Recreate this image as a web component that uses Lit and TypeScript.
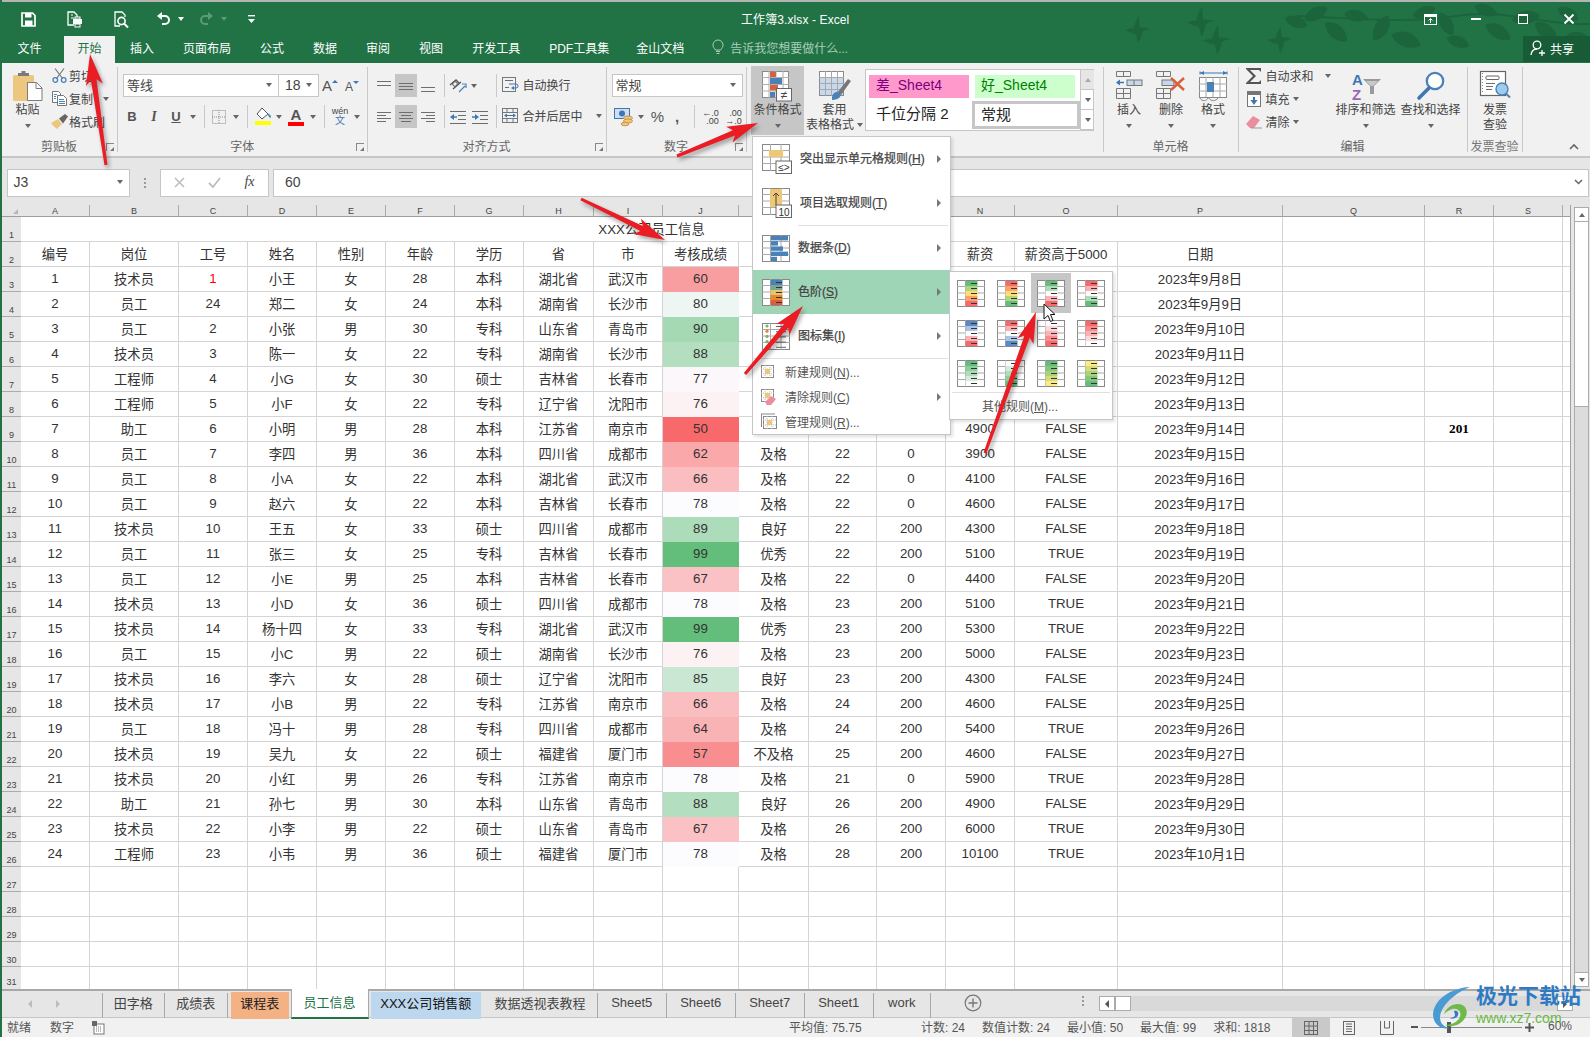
import { LitElement, html, css, svg } from 'lit';
import { customElement } from 'lit/decorators.js';

// sheet data, columns A..J then K..O where they show
const PEOPLE = `1 技术员 1 小王 女 28 本科 湖北省 武汉市 60
2 员工 24 郑二 女 24 本科 湖南省 长沙市 80
3 员工 2 小张 男 30 专科 山东省 青岛市 90
4 技术员 3 陈一 女 22 专科 湖南省 长沙市 88
5 工程师 4 小G 女 30 硕士 吉林省 长春市 77
6 工程师 5 小F 女 22 专科 辽宁省 沈阳市 76
7 助工 6 小明 男 28 本科 江苏省 南京市 50 - - - 4900 FALSE
8 员工 7 李四 男 36 本科 四川省 成都市 62 及格 22 0 3900 FALSE
9 员工 8 小A 女 22 本科 湖北省 武汉市 66 及格 22 0 4100 FALSE
10 员工 9 赵六 女 22 本科 吉林省 长春市 78 及格 22 0 4600 FALSE
11 技术员 10 王五 女 33 硕士 四川省 成都市 89 良好 22 200 4300 FALSE
12 员工 11 张三 女 25 专科 吉林省 长春市 99 优秀 22 200 5100 TRUE
13 员工 12 小E 男 25 本科 吉林省 长春市 67 及格 22 0 4400 FALSE
14 技术员 13 小D 女 36 硕士 四川省 成都市 78 及格 23 200 5100 TRUE
15 技术员 14 杨十四 女 33 专科 湖北省 武汉市 99 优秀 23 200 5300 TRUE
16 员工 15 小C 男 22 硕士 湖南省 长沙市 76 及格 23 200 5000 FALSE
17 技术员 16 李六 女 28 硕士 辽宁省 沈阳市 85 良好 23 200 4300 FALSE
18 技术员 17 小B 男 22 专科 江苏省 南京市 66 及格 24 200 4600 FALSE
19 员工 18 冯十 男 28 专科 四川省 成都市 64 及格 24 200 5400 TRUE
20 技术员 19 吴九 女 22 硕士 福建省 厦门市 57 不及格 25 200 4600 FALSE
21 技术员 20 小红 男 26 专科 江苏省 南京市 78 及格 21 0 5900 TRUE
22 助工 21 孙七 男 30 本科 山东省 青岛市 88 良好 26 200 4900 FALSE
23 技术员 22 小李 男 22 硕士 山东省 青岛市 67 及格 26 200 6000 TRUE
24 工程师 23 小韦 男 36 硕士 福建省 厦门市 78 及格 28 200 10100 TRUE`
  .split('\n')
  .map((l) => l.split(' '));

const HEAD = ['编号', '岗位', '工号', '姓名', '性别', '年龄', '学历', '省', '市', '考核成绩', '', '', '', '薪资', '薪资高于5000', '日期'];
const LETTERS = 'A B C D E F G H I J K L M N O P Q R S'.split(' ').concat('');

function dateOf(i: number) {
  return i < 23 ? `2023年9月${i + 8}日` : '2023年10月1日';
}

// green-white-red scale as excel does it, midpoint at the median
function scale(v: number) {
  const low = [0xf8, 0x69, 0x6b];
  const mid = [0xfc, 0xfc, 0xff];
  const high = [0x63, 0xbe, 0x7b];
  const t = v < 78 ? (v - 50) / 28 : (v - 78) / 21;
  const a = v < 78 ? low : mid;
  const b = v < 78 ? mid : high;
  const c = a.map((x, i) => Math.round(x + (b[i] - x) * t));
  return `rgb(${c[0]},${c[1]},${c[2]})`;
}

// ---- icons ----
const ic = (w: number, h: number, body: unknown) =>
  html`<svg width=${w} height=${h} viewBox="0 0 ${w} ${h}">${body}</svg>`;

const grey = '#6d6d6d';
const lines = (rows: number[][], c = grey) =>
  rows.map(([a, b, y]) => svg`<rect x=${a} y=${y} width=${b - a} height="1" fill=${c}/>`);

const saveIc = ic(15, 15, svg`<path d="M1 1h10.500l2.500 2.500V14H1z" fill="none" stroke="#fff" stroke-width="1.700"/><rect x="4" y="1" width="6.500" height="4.500" fill="#fff"/><rect x="4" y="8.500" width="7.500" height="5.500" fill="#fff"/>`);
const touchIc = ic(17, 17, svg`<path d="M8 14H2V1h6l3 3v2" fill="none" stroke="#fff" stroke-width="1.300"/><path d="M5 4h2M5 7h3" stroke="#fff"/><rect x="7" y="8" width="9" height="5" fill="#fff"/><rect x="9" y="6" width="5" height="2" fill="none" stroke="#fff"/><rect x="9" y="13" width="5" height="3" fill="none" stroke="#fff"/>`);
const previewIc = ic(15, 17, svg`<path d="M6 15H1V1h7l3 3v2" fill="none" stroke="#fff" stroke-width="1.300"/><circle cx="7.500" cy="10" r="3.600" fill="none" stroke="#fff" stroke-width="1.600"/><path d="M10 12.500l4 4" stroke="#fff" stroke-width="2"/>`);
const undoIc = (c: string) => ic(15, 14, svg`<path d="M3 4h6a4 4 0 0 1 0 8H6" fill="none" stroke=${c} stroke-width="2"/><path d="M6 0L1 4l5 4z" fill=${c}/>`);
const redoIc = (c: string) => ic(15, 14, svg`<g transform="translate(15 0) scale(-1 1)"><path d="M3 4h6a4 4 0 0 1 0 8H6" fill="none" stroke=${c} stroke-width="2"/><path d="M6 0L1 4l5 4z" fill=${c}/></g>`);
const custIc = ic(8, 10, svg`<rect y="1" width="7" height="1.400" fill="#fff"/><path d="M0 5h7L3.500 9z" fill="#fff"/>`);
const bulbIc = ic(12, 16, svg`<path d="M3.500 11C2 9 1 8 1 6a5 5 0 0 1 10 0c0 2-1 3-2.500 5z" fill="none" stroke="#a9cdb8"/><path d="M4 12.500h4M4.500 14.500h3" stroke="#a9cdb8"/>`);
const shareIc = ic(16, 16, svg`<circle cx="7" cy="5" r="3.800" fill="none" stroke="#fff" stroke-width="1.300"/><path d="M1 15c.5-4 3-6 6-6" fill="none" stroke="#fff" stroke-width="1.300"/><path d="M9 13h6M12 10v6" stroke="#fff" stroke-width="1.300"/>`);
const displayIc = ic(13, 11, svg`<rect x=".5" y=".5" width="12" height="10" fill="none" stroke="#fff"/><rect x="1" y="1" width="11" height="2" fill="#fff"/><path d="M6.500 9V5M4.500 6.500l2-2 2 2" fill="none" stroke="#fff"/>`);
const minIc = ic(10, 3, svg`<rect width="10" height="2" fill="#fff"/>`);
const maxIc = ic(10, 10, svg`<rect x=".5" y=".5" width="9" height="9" fill="none" stroke="#fff"/><rect width="10" height="2" fill="#fff"/>`);
const closeIc = ic(10, 10, svg`<path d="M.5.500l9 9M9.500.500l-9 9" stroke="#fff" stroke-width="1.800"/>`);

const pasteIc = ic(30, 30, svg`<rect x="0" y="4" width="21" height="26" rx="1.500" fill="#edc77f"/><path d="M5 5V2h3.500V0h4v2H16v3z" fill="#7a7a7a"/><path d="M14.500 11.500h9l5.500 5.500v12.500H14.500z" fill="#fff" stroke="#7c7c7c"/><path d="M23 12v5.500h6" fill="none" stroke="#7c7c7c"/>`);
const cutIc = ic(15, 15, svg`<path d="M3 .5l7.500 10M12 .5L4.500 10.500" stroke="#777" stroke-width="1.200"/><circle cx="3.300" cy="12" r="2.300" fill="none" stroke="#4a82b8" stroke-width="1.300"/><circle cx="11.700" cy="12" r="2.300" fill="none" stroke="#4a82b8" stroke-width="1.300"/>`);
const copyIc = ic(15, 15, svg`<path d="M.5.500h6l2 2v9H.5z" fill="#fff" stroke="#777"/><path d="M5.500 4.500h6l3 3v7h-9z" fill="#fff" stroke="#777"/>${lines([[2, 5, 3], [2, 4, 5], [2, 4, 7], [7, 12, 8], [7, 13, 10], [7, 13, 12]], '#4a82b8')}`);
const brushIc = ic(17, 15, svg`<path d="M0 9l7-4 4 5-5 5c-2-2-4-3-6-6z" fill="#edc77f"/><path d="M8 4.500l6-4.500 3 2.500-5 7z" fill="#666"/>`);
const bordersIc = ic(14, 14, svg`<rect x=".5" y=".5" width="13" height="13" fill="none" stroke="#8d8d8d" stroke-dasharray="1 1"/><path d="M7 0v14M0 7h14" stroke="#8d8d8d" stroke-dasharray="1 1"/>`);
const fillIc = ic(17, 19, svg`<path d="M7 1l6 6-6 5-5-5z" fill="#fff" stroke="#555"/><path d="M12 6c3 1 4 3 4 4s-1 1-2 0z" fill="#4a82b8"/><rect y="14" width="16" height="4" fill="#ffff00"/>`);
const alignIc = (rows: number[][]) => ic(16, 14, lines(rows, '#6e6e6e'));
const orientIc = ic(19, 18, svg`<path d="M1 8l6-5 3 3M4 12l8-7" fill="none" stroke="#555" stroke-width="1.300"/><path d="M10 15l6-6M13 7h4v4" fill="none" stroke="#4a82b8" stroke-width="1.200"/><circle cx="6" cy="7" r="2.300" fill="none" stroke="#555"/>`);
const indL = ic(17, 14, svg`${lines([[0, 16, 1], [8, 16, 5], [8, 16, 9], [0, 16, 13]])}<path d="M7 7H2" stroke="#3d78b4" stroke-width="1.500"/><path d="M4 4L0 7l4 3z" fill="#3d78b4"/>`);
const indR = ic(17, 14, svg`${lines([[0, 16, 1], [8, 16, 5], [8, 16, 9], [0, 16, 13]])}<path d="M0 7h5" stroke="#3d78b4" stroke-width="1.500"/><path d="M3 4l4 3-4 3z" fill="#3d78b4"/>`);
const wrapIc = ic(16, 15, svg`<rect x=".5" y=".5" width="13" height="14" fill="none" stroke="#777"/>${lines([[3, 11, 3], [3, 7, 10]])}<path d="M7 7h7a1.500 1.500 0 0 1 0 4h-3" fill="none" stroke="#3d78b4"/><path d="M12 9l-3 2 3 2z" fill="#3d78b4"/>`);
const mergeIc = ic(16, 15, svg`<rect x=".5" y=".5" width="15" height="14" fill="none" stroke="#777"/><path d="M0 4.500h16M0 10.500h16M5 0v4M11 0v4M5 11v4M11 11v4" stroke="#777"/><path d="M3 7.500h10" stroke="#3d78b4"/><path d="M5 5.500l-3 2 3 2zM11 5.500l3 2-3 2z" fill="#3d78b4"/>`);
const currIc = ic(19, 18, svg`<rect x=".5" y=".5" width="15" height="10" fill="#cfdfef" stroke="#3d78b4"/><circle cx="8" cy="5.500" r="3" fill="#3d78b4"/><ellipse cx="14" cy="10" rx="4.500" ry="2" fill="#edc77f" stroke="#c9964e"/><ellipse cx="14" cy="13" rx="4.500" ry="2" fill="#edc77f" stroke="#c9964e"/><ellipse cx="11" cy="16" rx="4" ry="1.800" fill="#edc77f" stroke="#c9964e"/>`);

const condIc = ic(31, 31, svg`<rect x=".5" y=".5" width="26" height="26" fill="#fff" stroke="#8a8a8a"/><path d="M7 0v27M14 0v27M21 0v27M0 6.500h27M0 13.500h27M0 20h27" stroke="#b0b0b0"/><rect x="8" y="1" width="6" height="5" fill="#d9603b"/><rect x="8" y="7" width="12" height="6" fill="#4a82b8"/><rect x="8" y="14" width="8" height="5.500" fill="#d9603b"/><rect x="8" y="21" width="5" height="5" fill="#4a82b8"/><rect x="14.500" y="17.500" width="15" height="12.500" fill="#fff" stroke="#666"/><text x="22" y="27.500" font-size="12" text-anchor="middle" fill="#444" font-family="Liberation Sans">≠</text>`);
const tableIc = ic(32, 30, svg`<rect x=".5" y=".5" width="24" height="24" fill="#fff" stroke="#8a8a8a"/><rect x="1" y="7" width="23" height="17" fill="#c7d9ec"/><path d="M6.500 0v25M12.500 0v25M18.500 0v25M0 6.500h25M0 12.500h25M0 18.500h25" stroke="#a8a8a8"/><path d="M18 22l11-14 3 2-10 14z" fill="#777"/><path d="M13 26c1-5 5-6 8-4 2 3-1 7-8 7z" fill="#4a82b8"/>`);
const insertIc = ic(27, 28, svg`<path d="M.5.500h14v5h-14zM7.500 0v6M.5 17.500h14v10h-14zM0 22.500h15M7.500 17v11" fill="none" stroke="#777"/><rect x="11" y="9" width="15" height="5.500" fill="#c6d9ec" stroke="#777"/><path d="M18 9v5.500" stroke="#777"/><path d="M1 11.500h7" stroke="#3d78b4" stroke-width="1.500"/><path d="M4 8.500l-4 3 4 3z" fill="#3d78b4"/>`);
const deleteIc = ic(30, 28, svg`<path d="M.5.500h14v5h-14zM7.500 0v6M.5 17.500h14v10h-14zM0 22.500h15M7.500 17v11" fill="none" stroke="#777"/><rect x="6" y="9" width="12" height="5.500" fill="#c6d9ec" stroke="#777"/><path d="M15 7l13 12M28 7L15 19" stroke="#d9603b" stroke-width="2.500"/>`);
const formatIc = ic(29, 31, svg`<path d="M1 2h27M1 .5v3M28 .5v3" stroke="#3d78b4"/><path d="M5 0L1 2l4 2zM24 0l4 2-4 2z" fill="#3d78b4"/><rect x=".5" y="6.500" width="27" height="20" fill="#fff" stroke="#8a8a8a"/><path d="M7 6v20M14 6v20M21 6v20M0 13h28M0 20h28" stroke="#a8a8a8"/><rect x="8" y="11" width="7" height="10" fill="#4a82b8"/><path d="M1 27c2 4 7 3 8 0M10 27c2 4 7 3 9 0" fill="none" stroke="#888"/>`);
const sigmaIc = ic(16, 16, svg`<path d="M0 0h15v4l-2-2H4l6 6-6 6h9l2-2v4H0v-1l7-7-7-7z" fill="#555"/>`);
const fillDownIc = ic(14, 16, svg`<rect x=".5" y=".5" width="13" height="15" fill="#fff" stroke="#777"/><rect x="1" y="1" width="12" height="3" fill="#777"/><path d="M7 6v6" stroke="#3d78b4" stroke-width="2"/><path d="M3.500 9L7 14l3.500-5z" fill="#3d78b4"/>`);
const eraserIc = ic(16, 14, svg`<path d="M0 9l7-8 7 4-6 8H4z" fill="#ea8e9e"/><path d="M5 13h11" stroke="#999"/>`);
const sortIc = ic(30, 30, svg`<text x="1" y="14" font-size="15" font-weight="700" fill="#3d78b4" font-family="Liberation Sans">A</text><text x="1" y="29" font-size="15" font-weight="700" fill="#9a64b8" font-family="Liberation Sans">Z</text><path d="M12 8h18l-7 7v8h-4v-8z" fill="#9a9a9a"/><path d="M15 10h12l-5 5h-2z" fill="#c9c9c9"/>`);
const findIc = ic(28, 30, svg`<circle cx="18" cy="10" r="8.200" fill="#fff" stroke="#4a82b8" stroke-width="2.300"/><path d="M12 17L2 27" stroke="#3d78b4" stroke-width="3.600" stroke-linecap="round"/>`);
const invoiceIc = ic(31, 30, svg`<rect x=".5" y=".5" width="25" height="24" fill="#fff" stroke="#666" stroke-width="1.200"/><rect x="6" y="5" width="13" height="3.500" rx="1" fill="none" stroke="#666"/>${lines([[6, 15, 12], [6, 13, 15], [6, 12, 18]])}<path d="M2.500 2v21" stroke="#888" stroke-dasharray="1 2"/><circle cx="22" cy="18" r="6" fill="#9ecbee" stroke="#4a82b8" stroke-width="1.400"/><path d="M26 22.500l4 4" stroke="#4a82b8" stroke-width="2"/>`);

const miniGrid = svg`<rect x=".5" y=".5" width="27" height="26" fill="#fff" stroke="#888"/><path d="M8.500 0v27M19 0v27M0 6.500h28M0 13h28M0 19.500h28" stroke="#aaa"/>`;
const hiIc = ic(30, 30, svg`${miniGrid}<rect x="7" y="6" width="14" height="7" fill="#eec877"/><rect x="14" y="17" width="15.500" height="12.500" fill="#fff" stroke="#666"/><text x="22" y="27" font-size="10" text-anchor="middle" fill="#333" font-family="Liberation Sans">≤&gt;</text>`);
const topIc = ic(30, 30, svg`${miniGrid}<rect x="8" y="1" width="12" height="18" fill="#eec877"/><path d="M14 17V5M11 8l3-3 3 3" fill="none" stroke="#444"/><rect x="14" y="17" width="15.500" height="12.500" fill="#fff" stroke="#666"/><text x="22" y="27.500" font-size="10" text-anchor="middle" fill="#333" font-family="Liberation Sans">10</text>`);
const barRows = [19, 9, 14, 19, 8];
const barsIc = ic(28, 27, svg`${miniGrid}${barRows.map((w, i) => svg`<rect x="9" y=${1 + i * 5.2} width=${w - 2} height="4.400" fill="#4a82b8"/>`)}`);
const setIc = ic(28, 27, svg`${miniGrid}${['#7fb069', '#e8812e', '#7fb069', '#7fb069', '#aaa'].map((c, i) => svg`<circle cx="5" cy=${3 + i * 5.2} r="1.600" fill=${c}/><rect x="14" y=${3 + i * 5.2} width="10" height="1" fill="#666"/>`)}`);
const newIc = ic(14, 13, svg`<rect x=".5" y=".5" width="12" height="12" fill="#fff" stroke="#888"/><path d="M4 0v13M9 0v13M0 4h13M0 9h13" stroke="#bbb" stroke-dasharray="1 1"/><rect x="4" y="4" width="5" height="5" fill="#eec877"/>`);
const clearIc = ic(18, 16, svg`<rect x=".5" y=".5" width="12" height="12" fill="#fff" stroke="#888"/><path d="M4 0v13M9 0v13M0 4h13M0 9h13" stroke="#bbb" stroke-dasharray="1 1"/><rect x="4" y="4" width="5" height="5" fill="#eec877"/><path d="M4 13l6-6 5 3-5 6H6z" fill="#ea8e9e"/>`);
const mgrIc = ic(16, 15, svg`<rect x="2.500" y="2.500" width="13" height="12" fill="#fff" stroke="#888"/><path d="M0 0h14" stroke="#888"/><path d="M.5 0v13" stroke="#888"/><path d="M6 2v13M11 2v13M2 6h14M2 11h14" stroke="#bbb" stroke-dasharray="1 1"/><rect x="6" y="6" width="5" height="5" fill="#eec877"/>`);

const scaleIc = (cs: string[]) =>
  ic(28, 27, svg`${miniGrid}${cs.map(
    (c, i) => svg`<rect x="8.500" y=${1 + i * 5} width="12" height="5" fill=${c}/><rect x="14" y=${3 + i * 5} width="6" height="1" fill="#333"/>`,
  )}`);
const G = '#63be7b', W = '#fcfcff', R = '#f8696b', Y = '#ffdd71', O = '#fba26e', B = '#5a8ac6';
const SCALES = [
  [G, '#b1d580', Y, O, R], [R, O, Y, '#b1d580', G], [G, '#b0dcba', W, '#fab2b4', R], [R, '#fab2b4', W, '#b0dcba', G],
  [B, '#abc4e2', W, '#fab2b4', R], [R, '#fab2b4', W, '#abc4e2', B], [W, '#fbd8d9', '#fab2b4', '#f98d8f', R], [R, '#f98d8f', '#fab2b4', '#fbd8d9', W],
  [G, '#8ccf9d', '#afdcba', '#d5ecdb', W], [W, '#d5ecdb', '#afdcba', '#8ccf9d', G], [G, '#87c77c', '#a9d27e', '#d3dd80', '#ffeb84'], ['#ffeb84', '#d3dd80', '#a9d27e', '#87c77c', G],
];

// red annotation arrows, tail is thin and the shaft widens into the head
const ARROWS = [
  [106, 165, 90, 54],
  [677, 156, 758, 123],
  [581, 199, 665, 240],
  [745, 374, 803, 306],
  [985, 453, 1036, 312],
];
function arrowPoints([x0, y0, x1, y1]: number[]) {
  const d = Math.hypot(x1 - x0, y1 - y0);
  const ux = (x1 - x0) / d, uy = (y1 - y0) / d;
  const nx = -uy, ny = ux;
  const at = (back: number, side: number) => `${x1 - ux * back + nx * side},${y1 - uy * back + ny * side}`;
  return [
    at(d, 1.5), at(26, 2.8), at(31, 8.5), `${x1},${y1}`, at(31, -8.5), at(26, -2.8), at(d, -1.5),
  ].join(' ');
}

const LEAVES = [
  [1296, 20, 20, 1], [1316, 12, -30, 1.1], [1336, 30, 40, 1.2], [1356, 14, 10, 1], [1381, 26, 120, 1.2], [1406, 38, 20, 1.3], [1424, 10, 160, 1],
  [1446, 22, 60, 1.1], [1458, 40, 20, 1], [1486, 8, 200, 1], [1498, 30, 30, 1.2], [1526, 16, -10, 1.2], [1546, 30, 40, 1.2], [1568, 12, 30, 1], [1578, 36, 10, 1],
];
const BIRDS = [
  [1136, 26, 1], [1199, 18, 1.1], [1215, 36, 1.1], [1278, 36, 1],
];

@customElement('app-root')
export class AppRoot extends LitElement {
  static styles = css`
    :host {
      display: block;
      width: 1590px;
      height: 1037px;
      font-family: 'Liberation Sans', 'Noto Sans CJK SC', sans-serif;
      font-size: 12px;
      color: #444;
      overflow: hidden;
    }
    * { box-sizing: border-box; }
    svg { display: block; flex: none; overflow: visible; }
    .app {
      position: relative;
      width: 1590px;
      height: 1037px;
      display: flex;
      flex-direction: column;
      border-left: 2px solid #217346;
      background: #e6e6e6;
      overflow: hidden;
    }
    .dd {
      display: inline-block;
      flex: none;
      width: 0;
      height: 0;
      border-left: 3.5px solid transparent;
      border-right: 3.5px solid transparent;
      border-top: 4px solid #666;
    }

    /* title bar and tab row */
    .chrome {
      position: relative;
      height: 63px;
      flex: none;
      margin-left: -2px;
      background: #217346;
      border-top: 2px solid #b4b4b4;
      color: #fff;
      overflow: hidden;
    }
    .deco { position: absolute; left: 0; top: 0; }
    .titlerow { position: relative; height: 34px; display: flex; align-items: center; }
    .qat { display: flex; align-items: center; width: 560px; flex: none; padding-left: 21px; }
    .qat .dd { border-top-color: #fff; }
    .q-save { width: 45px; }
    .q-touch { width: 48px; }
    .q-prev { width: 42px; }
    .q-undo { width: 22px; }
    .q-dd { margin-right: 15px; }
    .q-redo { width: 22px; }
    .qat .dim { border-top-color: #5c9a78; margin-right: 21px; }
    .title { margin-left: 181px; font-size: 12px; letter-spacing: 0.1px; width: 300px; flex: none; padding-bottom: 2px; }
    .win { margin-left: auto; margin-right: -2px; display: flex; align-items: center; flex: none; width: 185px; }
    .win > div { width: 46.25px; display: flex; justify-content: center; }
    .tabrow { position: relative; height: 27px; display: flex; align-items: stretch; font-size: 12px; }
    .tab { display: flex; align-items: center; padding: 0 14.5px 5px; white-space: nowrap; }
    .tab.first { margin-left: 3px; margin-right: 8px; }
    .tab.on { background: #f1f1f1; color: #217346; padding: 0 13.5px 5px; margin-right: 0.5px; }
    .tab.pdf { margin-right: -2px; }
    .tell { display: flex; align-items: center; gap: 6px; margin-left: 13.5px; padding-bottom: 5px; color: #a9cdb8; }
    .share {
      margin-left: auto;
      width: 67px;
      margin-bottom: 1px;
      background: #185c37;
      display: flex;
      align-items: center;
      gap: 4px;
      padding-left: 7px;
      padding-bottom: 2px;
    }

    /* ribbon */
    .ribbon {
      position: relative;
      height: 95px;
      margin-left: -1px;
      padding: 4px 0 4px;
      display: flex;
      background: #f1f1f1;
      border-bottom: 2px solid #c6c6c6;
      flex: none;
    }
    .group {
      position: relative;
      display: flex;
      flex-direction: column;
      border-right: 1px solid #c9c9c9;
      flex: none;
    }
    .gbody { height: 70px; display: flex; flex: none; }
    .glabel { height: 15px; text-align: center; line-height: 20px; color: #666; white-space: nowrap; }
    .launch {
      position: absolute;
      right: 3px;
      bottom: 1px;
      width: 8px;
      height: 8px;
      border-left: 1px solid #888;
      border-top: 1px solid #888;
    }
    .launch::after {
      content: '';
      position: absolute;
      right: 0;
      bottom: 0;
      border-left: 4px solid transparent;
      border-bottom: 4px solid #777;
    }
    .g-clip { width: 117px; }
    .g-font { width: 249.5px; }
    .g-align { width: 239px; }
    .g-num { width: 140px; }
    .g-style { width: 357px; }
    .g-cell { width: 135px; }
    .g-edit { width: 229px; }
    .g-inv { width: 55px; }
    .g-inv .glabel { color: #777; }

    .big { display: flex; flex-direction: column; align-items: center; padding-top: 4px; flex: none; }
    .big .ico { height: 31.5px; display: flex; align-items: flex-start; }
    .big .txt { height: 15px; line-height: 15px; white-space: nowrap; display: flex; align-items: center; gap: 3px; }
    .big .arr { height: 17px; display: flex; align-items: center; }

    .paste { width: 43px; margin-left: 5px; }
    .clipcol { margin-left: 1px; margin-top: -2px; }
    .srow { height: 23px; display: flex; align-items: center; gap: 3px; white-space: nowrap; padding-bottom: 2px; }
    .srow.tight { gap: 1px; }
    .srow.wide { gap: 5px; }
    .srow .i { width: 18px; display: flex; justify-content: center; flex: none; }
    .dd-9 { margin-left: 9px; }
    .dd-8 { margin-left: 8px; }
    .tools { padding: 7px 0 0 5px; display: flex; flex-direction: column; gap: 8px; }
    .trow { height: 23px; display: flex; align-items: center; }
    .trow.pull { margin-left: -2px; }
    .box { height: 23px; background: #fff; border: 1px solid #c6c6c6; display: flex; align-items: center; padding: 0 6px 2px 3px; justify-content: space-between; font-size: 13px; color: #444; flex: none; }
    .fontname { width: 156px; }
    .fontsize { width: 40px; border-left: 0; padding-left: 6px; font-size: 14px; }
    .numfmt { width: 131px; }
    .t { height: 23px; display: flex; align-items: center; justify-content: center; flex: none; }
    .w24 { width: 24px; }
    .w22 { width: 22px; }
    .w20 { width: 20px; }
    .w18 { width: 18px; }
    .w15 { width: 15px; }
    .w12 { width: 12px; }
    .w10 { width: 10px; }
    .sel { background: #c6c6c6; }
    .vsep { width: 1px; height: 23px; background: #c9c9c9; flex: none; }
    .s55 { margin: 0 5px; }
    .s45 { margin: 0 5px 0 4px; }
    .s56 { margin: 0 6px 0 5px; }
    .s53 { margin: 0 3px 0 5px; }
    .s165 { margin: 0 5px 0 16px; }
    .s43 { margin: 0 5px 0 4px; }
    .s9 { margin: 0 4px 0 9px; }
    .bold { font-weight: 700; font-size: 13px; color: #555; }
    .ital { font-style: italic; font-family: 'Liberation Serif', serif; font-weight: 700; font-size: 14px; color: #555; }
    .undl { text-decoration: underline; font-weight: 700; font-size: 13px; color: #555; }
    .grow { font-size: 15px; color: #555; line-height: 1; }
    .shrink { font-size: 12px; color: #555; line-height: 1; padding-top: 2px; }
    .up { width: 0; height: 0; margin-bottom: 8px; border-left: 3px solid transparent; border-right: 3px solid transparent; border-bottom: 3px solid #3d78b4; }
    .down { width: 0; height: 0; margin-bottom: 8px; border-left: 3px solid transparent; border-right: 3px solid transparent; border-top: 3px solid #3d78b4; }
    .fcolor { position: relative; width: 16px; height: 19px; font-size: 15px; font-weight: 700; color: #555; text-align: center; line-height: 15px; border-bottom: 4px solid #f00; }
    .wen { font-size: 9px; line-height: 9px; text-align: center; color: #444; }
    .wen b { display: block; font-weight: 400; font-size: 10px; line-height: 10px; color: #3d78b4; }
    .pct { font-size: 15px; color: #555; }
    .comma { font-size: 15px; font-weight: 700; color: #555; line-height: 8px; }
    .decimal { font-size: 9px; line-height: 8px; color: #444; display: flex; flex-direction: column; align-items: flex-end; }

    .cond { width: 53px; height: 69px; margin: -1px 0 0 4.5px; background: #c6c6c6; padding-top: 5px; }
    .tablef { width: 61px; }
    .gallery {
      width: 228.5px;
      height: 62px;
      margin-top: 2px;
      flex: none;
      border: 1px solid #c6c6c6;
      background: #fff;
      display: flex;
    }
    .gal-items {
      flex: 1;
      display: grid;
      grid-template-columns: 100px 108px;
      grid-template-rows: 22.5px 28px;
      gap: 3px;
      padding: 5px 0 0 3px;
      font-size: 14px;
    }
    .gal-items > div { display: flex; align-items: center; padding: 0 0 5px 7px; }
    .gal-items .bad { background: #ff99cc; color: #800080; }
    .gal-items .good { background: #ccffcc; color: #008000; margin: 0 5px 0 3px; padding-left: 6px; }
    .gal-items .norm { color: #222; font-size: 15px; }
    .gal-items .cur { border: 3px solid #c6c6c6; color: #222; padding-left: 6px; padding-bottom: 3px; font-size: 15px; }
    .gal-btns { width: 14px; flex: none; display: flex; flex-direction: column; border-left: 1px solid #c6c6c6; }
    .gal-btns > div { flex: 1; display: flex; align-items: center; justify-content: center; border-bottom: 1px solid #c6c6c6; }
    .gal-btns > div:first-child { background: #e6e6e6; }
    .upc { width: 0; height: 0; border-left: 3.5px solid transparent; border-right: 3.5px solid transparent; border-bottom: 4px solid #aaa; }
    .cells { padding-left: 4.5px; }
    .cellbtn { width: 42px; }
    .editcol { margin-left: 6px; margin-top: -2px; width: 88.5px; flex: none; }
    .edbig { width: 65px; }
    .invbig { width: 55px; }
    .collapse { position: absolute; right: 11px; bottom: 6px; }

    /* formula bar */
    .fbar { height: 47px; flex: none; display: flex; align-items: flex-start; padding-top: 11px; }
    .namebox { width: 123.5px; margin-left: 4.5px; height: 28px; background: #fff; border: 1px solid #c6c6c6; display: flex; align-items: center; justify-content: space-between; padding: 0 6px 3px; font-size: 14px; flex: none; }
    .dots { width: 30px; height: 28px; display: flex; flex-direction: column; gap: 2px; align-items: center; justify-content: center; flex: none; }
    .dots i { width: 2px; height: 2px; background: #999; }
    .fx { width: 109px; height: 28px; background: #fff; border: 1px solid #c6c6c6; display: flex; align-items: center; justify-content: space-around; padding: 0 2px 2px; flex: none; }
    .fxt { font-family: 'Liberation Serif', serif; font-style: italic; font-size: 14px; color: #444; }
    .finput { margin-left: 4px; width: 1316px; height: 28px; background: #fff; border: 1px solid #c6c6c6; display: flex; align-items: center; justify-content: space-between; padding: 0 5px 3px 11px; font-size: 14px; color: #444; flex: none; }

    /* sheet */
    .main { flex: 1; min-height: 0; display: flex; }
    .sheet {
      width: 1569px;
      flex: none;
      overflow: hidden;
      display: grid;
      grid-template-columns: 19px 69px 89px 69px 69px 69px 69px 69px 70px 69px 76px 70px 68px 69px 69px 103px 165px 142px 69px 69px 8px;
      grid-template-rows: 12px repeat(31, 25px);
      background: #fff;
      font-size: 13.3px;
      color: #333;
      border-right: 1px solid #a0a0a0;
    }
    .h { background: #e6e6e6; font-size: 9px; color: #444; display: flex; align-items: flex-end; justify-content: center; line-height: 10px; }
    .ch { border-right: 1px solid #ababab; border-bottom: 1px solid #9d9d9d; }
    .rh { border-bottom: 1px solid #ababab; font-size: 9px; padding-bottom: 1px; line-height: 9px; }
    .rh.last { padding-bottom: 4px; }
    .corner { border-bottom: 1px solid #9d9d9d; position: relative; }
    .corner::after { content: ''; position: absolute; right: 3px; bottom: 2px; border-left: 5px solid transparent; border-bottom: 5px solid #b6b6b6; }
    .c {
      border-right: 1px solid #d4d4d4;
      border-bottom: 1px solid #d4d4d4;
      display: flex;
      align-items: center;
      justify-content: center;
      white-space: nowrap;
      overflow: visible;
      padding-bottom: 1px;
    }
    .merged { grid-column: span 16; }
    .red { color: #ff0000; }
    .serif { font-family: 'Liberation Serif', serif; font-weight: 700; color: #000; }
    .filled { border-color: transparent; }
    .vbar { width: 15px; margin: 2px 0 2px 3px; flex: none; background: #dcdcdc; border: 1px solid #ababab; display: flex; flex-direction: column; }
    .vbtn { height: 14px; background: #fff; display: flex; align-items: center; justify-content: center; flex: none; border-bottom: 1px solid #ababab; }
    .vthumb { height: 185px; background: #fff; border-bottom: 1px solid #ababab; flex: none; }
    .vfill { flex: 1; }
    .vbtn.bot { border-top: 1px solid #ababab; border-bottom: 0; }
    .dnc { width: 0; height: 0; border-left: 3.5px solid transparent; border-right: 3.5px solid transparent; border-top: 4px solid #666; }
    .upd { width: 0; height: 0; border-left: 3.5px solid transparent; border-right: 3.5px solid transparent; border-bottom: 4px solid #666; }

    /* sheet tabs */
    .tabsbar { height: 28px; flex: none; display: flex; border-top: 2px solid #a8a8a8; background: #e6e6e6; font-size: 13px; color: #444; position: relative; }
    .nav { width: 100px; flex: none; display: flex; gap: 24px; align-items: center; padding-left: 26px; }
    .lt { width: 0; height: 0; border-top: 4px solid transparent; border-bottom: 4px solid transparent; border-right: 4px solid #bcbcbc; }
    .rt { width: 0; height: 0; border-top: 4px solid transparent; border-bottom: 4px solid transparent; border-left: 4px solid #bcbcbc; }
    .sheets {
      display: grid;
      flex: none;
      grid-template-columns: 62.5px 63.5px 62.5px 78px 114.5px 115px 68.5px 69.5px 68.5px 69.5px 56.5px;
      height: 25px;
    }
    .st { display: flex; align-items: center; justify-content: center; border-right: 1px solid #a8a8a8; white-space: nowrap; margin: 2px 0 3px; padding-bottom: 6px; }
    .st.first { border-left: 1px solid #a8a8a8; }
    .st.orange { background: #f4b183; color: #222; margin: 1px 2px 2px 3px; border: 0; }
    .st.active { background: #fff; color: #217346; margin: -2px 0 2px 0; border: 0; border-left: 1px solid #a8a8a8; border-right: 1px solid #a8a8a8; border-bottom: 2px solid #217346; padding-bottom: 4px; }
    .st.blue { background: #bdd7ee; color: #111; margin: 1px 2px 2px 2px; border: 0; }
    .plus { margin-left: 33px; margin-top: 3px; width: 18px; height: 18px; flex: none; }
    .gripdots { margin-left: 100px; margin-top: 5px; display: flex; flex-direction: column; gap: 2px; height: 12px; }
    .gripdots i { width: 2px; height: 2px; background: #999; }
    .hbar { position: absolute; left: 1097px; right: 17px; top: 5px; height: 15px; background: #d9d9d9; display: flex; }
    .hbtn { width: 16px; background: #fff; border: 1px solid #ababab; display: flex; align-items: center; justify-content: center; }
    .hbtn .lt { border-right-color: #555; }
    .hbtn .rt { border-left-color: #555; }
    .hfill { flex: 1; }

    /* status bar */
    .status { height: 20px; flex: none; display: flex; align-items: center; background: #f1f1f1; border-top: 1px solid #c6c6c6; font-size: 12px; color: #555; padding: 0 18px 0 6px; margin-left: -1px; }
    .s-ready { width: 43px; padding-bottom: 3px; }
    .s-num { width: 41px; padding-bottom: 3px; }
    .s-avg { margin-left: 684px; width: 132px; padding-bottom: 3px; }
    .s-it { margin-right: 17px; white-space: nowrap; padding-bottom: 3px; }
    .view { height: 20px; display: flex; align-items: center; justify-content: center; width: 38px; flex: none; }
    .view.on { background: #c9c9c9; margin-left: auto; }
    .zoombar { display: flex; align-items: center; margin-left: 5px; }
    .track { position: relative; width: 101px; height: 1px; background: #888; margin: 0 3px; }
    .track::after { content: ''; position: absolute; left: 26px; top: -5px; width: 4px; height: 11px; background: #555; }
    .zoom-n { margin-left: 14px; padding-bottom: 3px; }

    /* floating menus */
    .menu {
      position: absolute;
      left: 750px;
      top: 136px;
      width: 199px;
      background: #fff;
      border: 1px solid #c6c6c6;
      box-shadow: 2px 2px 3px rgba(0, 0, 0, 0.12);
      font-size: 12px;
      color: #444;
    }
    .mi { height: 44px; display: flex; align-items: center; padding-left: 9px; position: relative; -webkit-text-stroke: 0.25px #444; }
    .mi.hot { background: #9fd5b7; }
    .mi .lbl { margin: 0 0 4px 8px; }
    .chev { position: absolute; right: 9px; top: 50%; margin-top: -4px; width: 0; height: 0; border-top: 4px solid transparent; border-bottom: 4px solid transparent; border-left: 4px solid #777; }
    .msep { height: 1px; background: #dfdfdf; margin-left: 45px; margin-right: 2px; }
    .msep.full { margin-left: 0; }
    .ms { height: 25px; display: flex; align-items: center; position: relative; padding-left: 8px; color: #555; }
    .ms .ii { width: 24px; flex: none; }
    .sub {
      position: absolute;
      left: 947px;
      top: 271px;
      width: 164px;
      height: 149px;
      background: #fff;
      border: 1px solid #c6c6c6;
      box-shadow: 2px 2px 3px rgba(0, 0, 0, 0.12);
    }
    .subgrid { display: grid; grid-template-columns: repeat(4, 40px); grid-auto-rows: 40px; padding: 1px 0 0 1px; }
    .sc { display: flex; align-items: center; justify-content: center; }
    .sc.sel { background: #c6c6c6; }
    .subsep { height: 1px; background: #dfdfdf; margin: -1px 2px 0; }
    .more { padding-left: 32px; line-height: 28px; color: #555; }
    .cursor { position: absolute; left: 1041px; top: 303px; }
    .arrows { position: absolute; left: -2px; top: 0; pointer-events: none; filter: drop-shadow(2px 3px 2px rgba(0, 0, 0, 0.35)); }

    /* watermark */
    .mark { position: absolute; left: 1428px; top: 984px; width: 160px; height: 53px; display: flex; pointer-events: none; }
    .mark-t { margin-left: 2px; }
    .mark-a { font-size: 21px; font-weight: 700; line-height: 24px; color: #2e7bc4; white-space: nowrap; }
    .mark-b { font-size: 14px; line-height: 16px; color: #69b944; margin-top: 2px; }
  `;

  renderChrome() {
    return html`
      <div class="chrome">
        <svg class="deco" width="1590" height="60">
          <g fill="#1c643c">
            ${BIRDS.map(([x, y, s]) => svg`<path transform="translate(${x} ${y}) scale(${s})" d="M-11 2c4-1 6-2 8-1 2-5 3-9 6-13 0 5 0 9 1 12 3-1 7 0 10 1-3 1-6 1-8 3 0 3-2 8-4 11-1-3-1-6-2-9-3 0-7-2-11-4z"/>`)}
            ${LEAVES.map(([x, y, r, s]) => svg`<path transform="translate(${x} ${y}) rotate(${r}) scale(${s})" d="M-12 0C-6-8 6-8 12 0 6 7-6 7-12 0z"/>`)}
          </g>
          <path d="M1296 14C1346 16 1406 22 1456 14S1546 24 1590 22" stroke="#1c643c" stroke-width="2" fill="none"/>
        </svg>
        <div class="titlerow">
          <div class="qat">
            <div class="q-save">${saveIc}</div>
            <div class="q-touch">${touchIc}</div>
            <div class="q-prev">${previewIc}</div>
            <div class="q-undo">${undoIc('#fff')}</div>
            <span class="dd q-dd"></span>
            <div class="q-redo">${redoIc('#5c9a78')}</div>
            <span class="dd dim"></span>
            <div>${custIc}</div>
          </div>
          <div class="title">工作簿3.xlsx - Excel</div>
          <div class="win">
            <div>${displayIc}</div><div>${minIc}</div><div>${maxIc}</div><div>${closeIc}</div>
          </div>
        </div>
        <div class="tabrow">
          <div class="tab first">文件</div>
          <div class="tab on">开始</div>
          ${['插入', '页面布局', '公式', '数据', '审阅', '视图', '开发工具'].map((t) => html`<div class="tab">${t}</div>`)}
          <div class="tab pdf">PDF工具集</div>
          <div class="tab">金山文档</div>
          <div class="tell">${bulbIc}<span>告诉我您想要做什么...</span></div>
          <div class="share">${shareIc}<span>共享</span></div>
        </div>
      </div>
    `;
  }

  renderClipboard() {
    return html`
      <div class="group g-clip">
        <div class="gbody">
          <div class="big paste">
            <div class="ico">${pasteIc}</div>
            <div class="txt">粘贴</div>
            <div class="arr"><span class="dd"></span></div>
          </div>
          <div class="clipcol">
            <div class="srow tight"><span class="i">${cutIc}</span>剪切</div>
            <div class="srow tight"><span class="i">${copyIc}</span>复制<span class="dd dd-9"></span></div>
            <div class="srow tight"><span class="i">${brushIc}</span>格式刷</div>
          </div>
        </div>
        <div class="glabel">剪贴板</div>
        <span class="launch"></span>
      </div>
    `;
  }

  renderFont() {
    return html`
      <div class="group g-font">
        <div class="gbody">
          <div class="tools">
            <div class="trow">
              <div class="box fontname"><span>等线</span><span class="dd"></span></div>
              <div class="box fontsize"><span>18</span><span class="dd"></span></div>
              <div class="t w22 grow">A<span class="up"></span></div>
              <div class="t w22 shrink">A<span class="down"></span></div>
            </div>
            <div class="trow pull">
              <div class="t w22 bold">B</div>
              <div class="t w22 ital">I</div>
              <div class="t w22 undl">U</div>
              <div class="t w12"><span class="dd"></span></div>
              <span class="vsep s55"></span>
              <div class="t w18">${bordersIc}</div>
              <div class="t w15"><span class="dd"></span></div>
              <span class="vsep s45"></span>
              <div class="t w20">${fillIc}</div>
              <div class="t w12"><span class="dd"></span></div>
              <div class="t w22"><div class="fcolor">A</div></div>
              <div class="t w12"><span class="dd"></span></div>
              <span class="vsep s56"></span>
              <div class="t w18"><div class="wen">wén<b>文</b></div></div>
              <div class="t w15"><span class="dd"></span></div>
            </div>
          </div>
        </div>
        <div class="glabel">字体</div>
        <span class="launch"></span>
      </div>
    `;
  }

  renderAlign() {
    const top = alignIc([[1, 15, 2], [1, 15, 6]]);
    const mid = alignIc([[1, 15, 4], [1, 15, 7], [1, 15, 10]]);
    const bot = alignIc([[1, 15, 8], [1, 15, 12]]);
    const l = alignIc([[1, 15, 2], [1, 10, 5], [1, 15, 8], [1, 10, 11]]);
    const c = alignIc([[1, 15, 2], [3, 13, 5], [1, 15, 8], [3, 13, 11]]);
    const r = alignIc([[1, 15, 2], [6, 15, 5], [1, 15, 8], [6, 15, 11]]);
    return html`
      <div class="group g-align">
        <div class="gbody">
          <div class="tools">
            <div class="trow">
              <div class="t w22">${top}</div>
              <div class="t w22 sel">${mid}</div>
              <div class="t w22">${bot}</div>
              <span class="vsep s55"></span>
              <div class="t w18">${orientIc}</div>
              <div class="t w12"><span class="dd"></span></div>
              <span class="vsep s165"></span>
              <div class="srow wide"><span>${wrapIc}</span>自动换行</div>
            </div>
            <div class="trow">
              <div class="t w22">${l}</div>
              <div class="t w22 sel">${c}</div>
              <div class="t w22">${r}</div>
              <span class="vsep s53"></span>
              <div class="t w22">${indL}</div>
              <div class="t w22">${indR}</div>
              <span class="vsep s43"></span>
              <div class="srow wide"><span>${mergeIc}</span>合并后居中<span class="dd dd-8"></span></div>
            </div>
          </div>
        </div>
        <div class="glabel">对齐方式</div>
        <span class="launch"></span>
      </div>
    `;
  }

  renderNumber() {
    return html`
      <div class="group g-num">
        <div class="gbody">
          <div class="tools">
            <div class="trow"><div class="box numfmt"><span>常规</span><span class="dd"></span></div></div>
            <div class="trow">
              <div class="t w24">${currIc}</div>
              <div class="t w10"><span class="dd"></span></div>
              <div class="t w24 pct">%</div>
              <div class="t w15 comma">,</div>
              <span class="vsep s9"></span>
              <div class="t w24"><div class="decimal">←.0<span>.00</span></div></div>
              <div class="t w22"><div class="decimal">.00<span>→.0</span></div></div>
            </div>
          </div>
        </div>
        <div class="glabel">数字</div>
        <span class="launch"></span>
      </div>
    `;
  }

  renderStyles() {
    return html`
      <div class="group g-style">
        <div class="gbody">
          <div class="big cond">
            <div class="ico">${condIc}</div>
            <div class="txt">条件格式</div>
            <div class="arr"><span class="dd"></span></div>
          </div>
          <div class="big tablef">
            <div class="ico">${tableIc}</div>
            <div class="txt">套用</div>
            <div class="txt">表格格式<span class="dd"></span></div>
          </div>
          <div class="gallery">
            <div class="gal-items">
              <div class="bad">差_Sheet4</div>
              <div class="good">好_Sheet4</div>
              <div class="norm">千位分隔 2</div>
              <div class="cur">常规</div>
            </div>
            <div class="gal-btns">
              <div><span class="upc"></span></div>
              <div><span class="dnc"></span></div>
              <div><span class="dnc"></span></div>
            </div>
          </div>
        </div>
        <div class="glabel"></div>
      </div>
    `;
  }

  renderCells() {
    const b = (icon: unknown, t: string) => html`
      <div class="big cellbtn">
        <div class="ico">${icon}</div>
        <div class="txt">${t}</div>
        <div class="arr"><span class="dd"></span></div>
      </div>
    `;
    return html`
      <div class="group g-cell">
        <div class="gbody cells">
          ${b(insertIc, '插入')} ${b(deleteIc, '删除')} ${b(formatIc, '格式')}
        </div>
        <div class="glabel">单元格</div>
      </div>
    `;
  }

  renderEdit() {
    return html`
      <div class="group g-edit">
        <div class="gbody">
          <div class="editcol">
            <div class="srow"><span class="i">${sigmaIc}</span>自动求和<span class="dd dd-8"></span></div>
            <div class="srow"><span class="i">${fillDownIc}</span>填充<span class="dd"></span></div>
            <div class="srow"><span class="i">${eraserIc}</span>清除<span class="dd"></span></div>
          </div>
          <div class="big edbig">
            <div class="ico">${sortIc}</div>
            <div class="txt">排序和筛选</div>
            <div class="arr"><span class="dd"></span></div>
          </div>
          <div class="big edbig">
            <div class="ico">${findIc}</div>
            <div class="txt">查找和选择</div>
            <div class="arr"><span class="dd"></span></div>
          </div>
        </div>
        <div class="glabel">编辑</div>
      </div>
    `;
  }

  renderRibbon() {
    return html`
      <div class="ribbon">
        ${this.renderClipboard()} ${this.renderFont()} ${this.renderAlign()} ${this.renderNumber()}
        ${this.renderStyles()} ${this.renderCells()} ${this.renderEdit()}
        <div class="group g-inv">
          <div class="gbody">
            <div class="big invbig">
              <div class="ico">${invoiceIc}</div>
              <div class="txt">发票</div>
              <div class="txt">查验</div>
            </div>
          </div>
          <div class="glabel">发票查验</div>
        </div>
        <div class="collapse">
          ${ic(10, 6, svg`<path d="M1 5l4-4 4 4" fill="none" stroke="#666" stroke-width="1.600"/>`)}
        </div>
      </div>
    `;
  }

  renderFormula() {
    return html`
      <div class="fbar">
        <div class="namebox"><span>J3</span><span class="dd"></span></div>
        <div class="dots"><i></i><i></i><i></i></div>
        <div class="fx">
          ${ic(11, 11, svg`<path d="M1 1l9 9M10 1l-9 9" stroke="#bcbcbc" stroke-width="1.500"/>`)}
          ${ic(13, 11, svg`<path d="M1 6l4 4 7-9" fill="none" stroke="#bcbcbc" stroke-width="1.800"/>`)}
          <span class="fxt">fx</span>
        </div>
        <div class="finput">
          <span>60</span>
          ${ic(9, 6, svg`<path d="M1 1l3.500 3.500L8 1" fill="none" stroke="#666" stroke-width="1.500"/>`)}
        </div>
      </div>
    `;
  }

  renderSheet() {
    const rows = [];
    for (let r = 1; r <= 31; r++) {
      const cells = [html`<div class="h rh ${r === 31 ? 'last' : ''}">${r}</div>`];
      if (r === 1) {
        cells.push(html`<div class="c merged">XXX公司员工信息</div>`);
        for (let i = 0; i < 4; i++) cells.push(html`<div class="c"></div>`);
      } else {
        for (let col = 0; col < 20; col++) {
          let text = '';
          let cls = 'c';
          let fill = '';
          if (r === 2) {
            text = HEAD[col] ?? '';
          } else if (r <= 26) {
            const p = PEOPLE[r - 3];
            if (col === 15) text = dateOf(r - 3);
            else if (col < 15 && p[col] && p[col] !== '-') text = p[col];
            if (col === 9) {
              fill = scale(Number(p[9]));
              cls += ' filled';
            }
            if (col === 2 && r === 3) cls += ' red';
            if (col === 17 && r === 9) {
              text = '201';
              cls += ' serif';
            }
          }
          cells.push(html`<div class=${cls} style=${fill ? `background:${fill}` : ''}>${text}</div>`);
        }
      }
      rows.push(cells);
    }
    return html`
      <div class="main">
        <div class="sheet">
          <div class="h corner"></div>
          ${LETTERS.map((l) => html`<div class="h ch">${l}</div>`)}
          ${rows}
        </div>
        <div class="vbar">
          <div class="vbtn"><span class="upd"></span></div>
          <div class="vthumb"></div>
          <div class="vfill"></div>
          <div class="vbtn bot"><span class="dnc"></span></div>
        </div>
      </div>
    `;
  }

  renderTabs() {
    return html`
      <div class="tabsbar">
        <div class="nav"><span class="lt"></span><span class="rt"></span></div>
        <div class="sheets">
          <div class="st first">田字格</div>
          <div class="st">成绩表</div>
          <div class="st orange">课程表</div>
          <div class="st active">员工信息</div>
          <div class="st blue">XXX公司销售额</div>
          <div class="st">数据透视表教程</div>
          <div class="st">Sheet5</div>
          <div class="st">Sheet6</div>
          <div class="st">Sheet7</div>
          <div class="st">Sheet1</div>
          <div class="st">work</div>
        </div>
        <div class="plus">
          ${ic(18, 18, svg`<circle cx="9" cy="9" r="7.800" fill="none" stroke="#777" stroke-width="1.200"/><path d="M9 4.500v9M4.500 9h9" stroke="#777" stroke-width="1.400"/>`)}
        </div>
        <div class="gripdots"><i></i><i></i><i></i></div>
        <div class="hbar">
          <div class="hbtn"><span class="lt"></span></div>
          <div class="hbtn"></div>
          <div class="hfill"></div>
          <div class="hbtn"><span class="rt"></span></div>
        </div>
      </div>
    `;
  }

  renderStatus() {
    return html`
      <div class="status">
        <span class="s-ready">就绪</span>
        <span class="s-num">数字</span>
        ${ic(14, 15, svg`<rect x="3" y="4" width="10" height="10" fill="#fff" stroke="#777"/><rect x="1" y="1" width="5" height="5" fill="#666"/><path d="M5 7h6M5 9h6M5 11h6" stroke="#777" stroke-dasharray="1 1"/>`)}
        <span class="s-avg">平均值: 75.75</span>
        <span class="s-it">计数: 24</span>
        <span class="s-it">数值计数: 24</span>
        <span class="s-it">最小值: 50</span>
        <span class="s-it">最大值: 99</span>
        <span class="s-it">求和: 1818</span>
        <div class="view on">
          ${ic(14, 14, svg`<rect x=".5" y=".5" width="13" height="13" fill="none" stroke="#666"/><path d="M5 0v14M9.500 0v14M0 5h14M0 9.500h14" stroke="#666"/>`)}
        </div>
        <div class="view">
          ${ic(12, 14, svg`<rect x=".5" y=".5" width="11" height="13" fill="none" stroke="#666"/><path d="M3 3h6M3 5.500h6M3 8h6M3 10.500h6" stroke="#666"/>`)}
        </div>
        <div class="view">
          ${ic(14, 14, svg`<path d="M.5 0v13.500h13V0M4.500 0v7h5V0" fill="none" stroke="#666"/>`)}
        </div>
        <div class="zoombar">
          ${ic(7, 3, svg`<rect width="7" height="2" fill="#555"/>`)}
          <div class="track"></div>
          ${ic(9, 9, svg`<path d="M4.500 0v9M0 4.500h9" stroke="#555" stroke-width="2"/>`)}
        </div>
        <span class="zoom-n">60%</span>
      </div>
    `;
  }

  renderMenus() {
    const mi = (icon: unknown, t: string, key: string, hot = false) => html`
      <div class="mi ${hot ? 'hot' : ''}">${icon}<span class="lbl">${t}(<u>${key}</u>)</span><span class="chev"></span></div>
    `;
    const mainIcon = scaleIc(['#4a82b8', '#7ba696', '#e8c36b', '#e8892f', '#d9603b']);
    return html`
      <div class="menu">
        ${mi(hiIc, '突出显示单元格规则', 'H')}
        ${mi(topIc, '项目选取规则', 'T')}
        <div class="msep"></div>
        ${mi(barsIc, '数据条', 'D')}
        ${mi(mainIcon, '色阶', 'S', true)}
        ${mi(setIc, '图标集', 'I')}
        <div class="msep full"></div>
        <div class="ms"><span class="ii">${newIc}</span><span>新建规则(<u>N</u>)...</span></div>
        <div class="ms"><span class="ii">${clearIc}</span><span>清除规则(<u>C</u>)</span><span class="chev"></span></div>
        <div class="ms"><span class="ii">${mgrIc}</span><span>管理规则(<u>R</u>)...</span></div>
      </div>
      <div class="sub">
        <div class="subgrid">
          ${SCALES.map((c, i) => html`<div class="sc ${i === 2 ? 'sel' : ''}">${scaleIc(c)}</div>`)}
        </div>
        <div class="subsep"></div>
        <div class="more">其他规则(<u>M</u>)...</div>
      </div>
      <div class="cursor">
        ${ic(13, 20, svg`<path d="M1 1v15l4-3.500 2.500 6 2.500-1-2.500-6H12z" fill="#fff" stroke="#111"/>`)}
      </div>
    `;
  }

  render() {
    return html`
      <div class="app">
        ${this.renderChrome()} ${this.renderRibbon()} ${this.renderFormula()} ${this.renderSheet()}
        ${this.renderTabs()} ${this.renderStatus()}
        ${this.renderMenus()}
        <svg class="arrows" width="1590" height="1037">
          ${ARROWS.map((a) => svg`<polygon points=${arrowPoints(a)} fill="#ea1c24"/>`)}
        </svg>
        <div class="mark">
          ${ic(44, 53, svg`<path d="M40 3C20 4 4 16 3 30c0 10 8 16 16 14C10 42 8 34 12 26 17 16 28 8 40 3z" fill="#4a9ad4"/><path d="M14 30c2-6 8-10 14-10 8 0 11 8 7 14-4 7-13 10-20 7 6 0 13-3 15-8 2-6-3-9-8-8-3 1-6 3-8 5z" fill="#6fb94a"/><path d="M24 27c3-1 5 1 4 4s-6 5-8 3c2 0 5-1 5-3s-1-3-1-4z" fill="#2e7bc4"/>`)}
          <div class="mark-t">
            <div class="mark-a">极光下载站</div>
            <div class="mark-b">www.xz7.com</div>
          </div>
        </div>
      </div>
    `;
  }
}
